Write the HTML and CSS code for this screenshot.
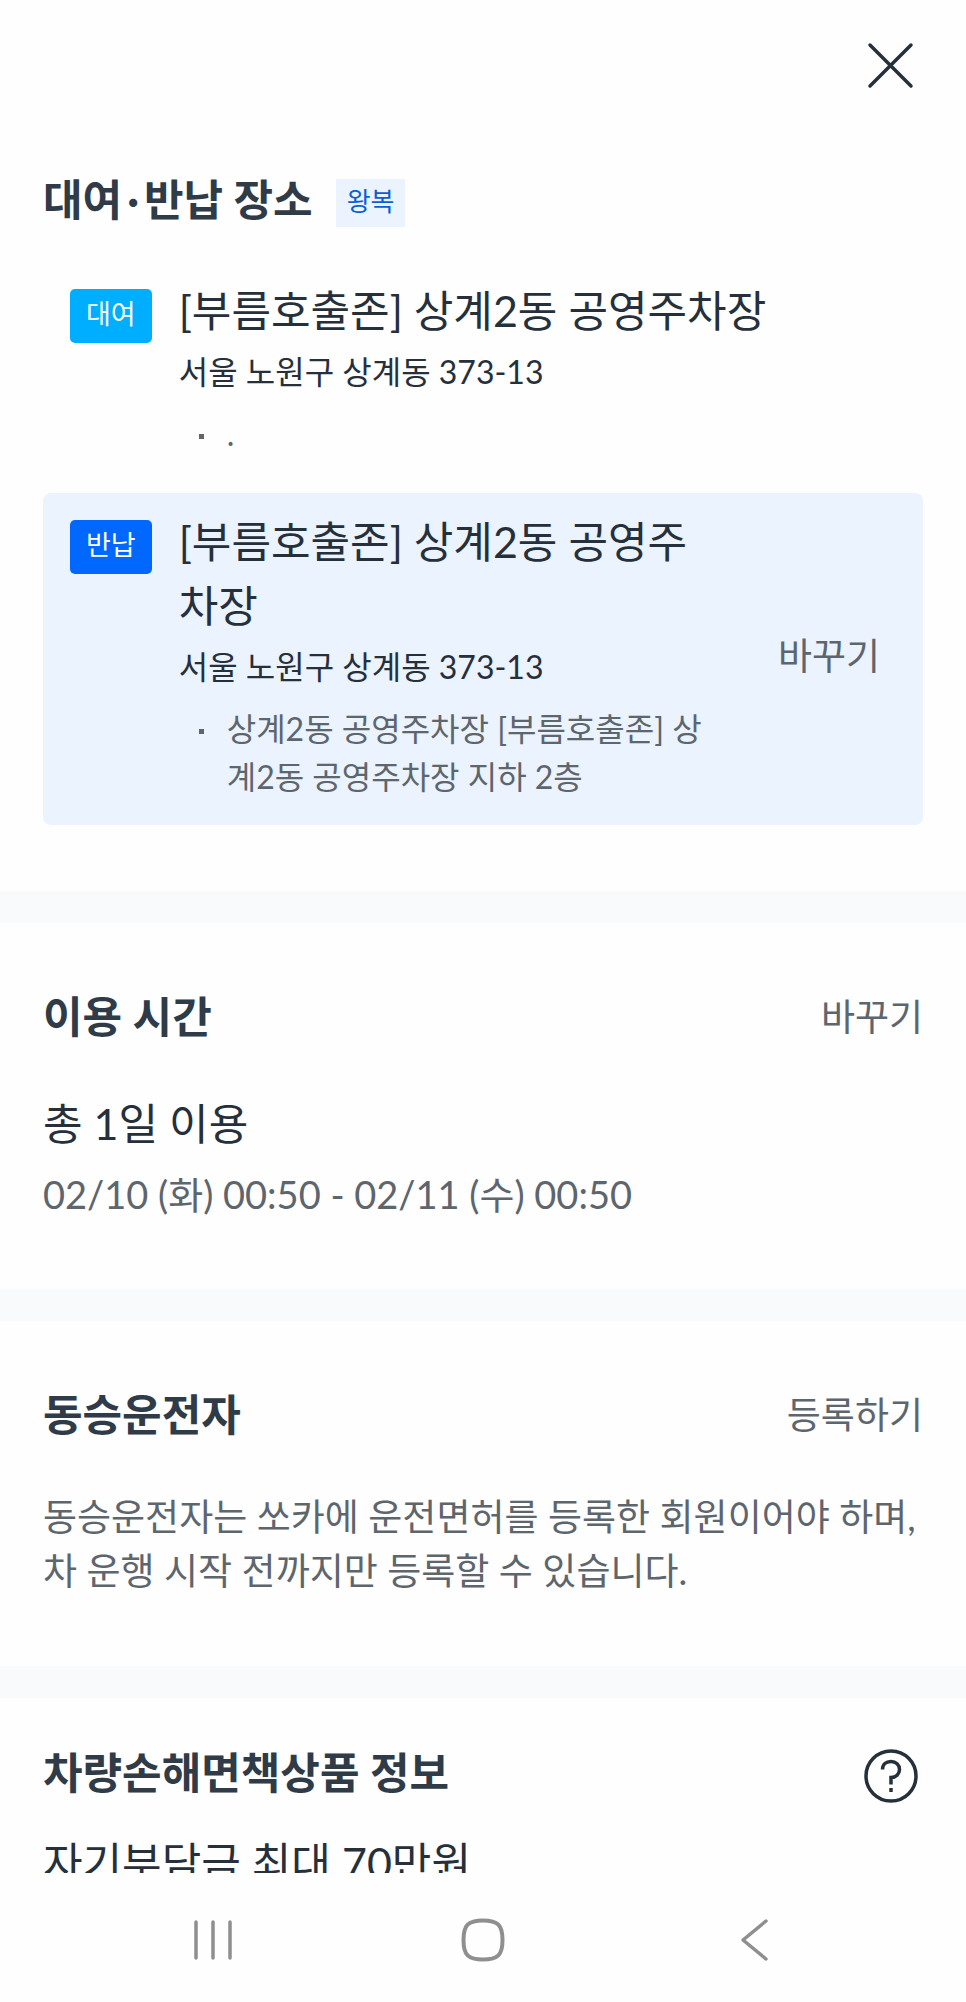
FILE: index.html
```html
<!DOCTYPE html>
<html lang="ko">
<head>
    <meta charset="UTF-8">
    <meta name="viewport" content="width=device-width, initial-scale=1">
    <title>예약 정보</title>
    <link rel="stylesheet" href="styles.css">
</head>

<body>
    <main class="content">
        <header class="topbar">
            <button class="icon-btn" type="button" aria-label="닫기">
                <svg width="54" height="54" viewBox="0 0 54 54" fill="none" stroke="#26303b" stroke-width="3.500" stroke-linecap="round">
                    <path d="M6 7L47 48M47 7L6 48"/>
                </svg>
            </button>
        </header>

        <section class="section places">
            <div class="section-head">
                <h2>대여<span class="dot">·</span>반납 장소</h2>
                <span class="tag">왕복</span>
            </div>
            <div class="place">
                <span class="badge rent">대여</span>
                <div class="place-info">
                    <p class="name">[부름호출존] 상계2동 공영주차장</p>
                    <p class="address">서울 노원구 상계동 373-13</p>
                    <ul class="notes">
                        <li>.</li>
                    </ul>
                </div>
            </div>
            <div class="place selected">
                <span class="badge return">반납</span>
                <div class="place-info">
                    <p class="name">[부름호출존] 상계2동 공영주차장</p>
                    <p class="address">서울 노원구 상계동 373-13</p>
                    <ul class="notes">
                        <li>상계2동 공영주차장 [부름호출존] 상계2동 공영주차장 지하 2층</li>
                    </ul>
                </div>
                <button class="text-btn" type="button">바꾸기</button>
            </div>
        </section>

        <section class="section time">
            <div class="section-head">
                <h2>이용 시간</h2>
                <button class="text-btn" type="button">바꾸기</button>
            </div>
            <p class="name">총 1일 이용</p>
            <p class="period">02/10 (화) 00:50 - 02/11 (수) 00:50</p>
        </section>

        <section class="section driver">
            <div class="section-head">
                <h2>동승운전자</h2>
                <button class="text-btn" type="button">등록하기</button>
            </div>
            <p class="guide">동승운전자는 쏘카에 운전면허를 등록한 회원이어야 하며, 차 운행 시작 전까지만 등록할 수 있습니다.</p>
        </section>

        <section class="section insurance">
            <div class="section-head">
                <h2>차량손해면책상품 정보</h2>
                <button class="icon-btn" type="button" aria-label="도움말">
                    <svg width="54" height="54" viewBox="0 0 54 54" fill="none" stroke="#26303b" stroke-width="3.500">
                        <circle cx="27" cy="27" r="25"/>
                        <path d="M18.500 20.500C18.500 15.500 22 12.500 27 12.500S35.500 16 35.500 20.500S32 28.500 27 28.500V35.500"/>
                        <path d="M27 39V43"/>
                    </svg>
                </button>
            </div>
            <p class="name">자기부담금 최대 70만원</p>
        </section>
    </main>

    <nav class="navbar">
        <button type="button" aria-label="최근 앱">
            <svg width="44" height="44" viewBox="0 0 44 44" fill="none" stroke="#8f8f8f" stroke-width="3.500" stroke-linecap="round">
                <path d="M5 4V40M22 4V40M39 4V40"/>
            </svg>
        </button>
        <button type="button" aria-label="홈">
            <svg width="44" height="44" viewBox="0 0 44 44" fill="none" stroke="#8f8f8f" stroke-width="4">
                <path d="M22 2.500C37 2.500 41.500 7 41.500 22S37 41.500 22 41.500S2.500 37 2.500 22S7 2.500 22 2.500Z"/>
            </svg>
        </button>
        <button type="button" aria-label="뒤로">
            <svg width="44" height="44" viewBox="0 0 44 44" fill="none" stroke="#8f8f8f" stroke-width="3.500" stroke-linecap="round" stroke-linejoin="round">
                <path d="M35 3L12 22L35 41"/>
            </svg>
        </button>
    </nav>
</body>
</html>
```
FILE: styles.css
```css
* {
    box-sizing: border-box;
}

body {
    display: flex;
    flex-direction: column;
    height: 100vh;
    margin: 0;
    background: #fefefe;
    color: #26303b;
    font-family: Lato, "Noto Sans CJK KR", sans-serif;
}

h2, p, ul {
    margin: 0;
    padding: 0;
}

h2 {
    font-size: 43px;
    line-height: 64px;
    font-weight: 700;
    color: #2f3b47;
}

button {
    padding: 0;
    border: 0;
    background: none;
    font-family: inherit;
    cursor: pointer;
}

svg {
    display: block;
}

.content {
    flex: 1;
    min-height: 0;
    overflow: hidden;
}

.topbar {
    display: flex;
    justify-content: flex-end;
    padding: 38px 48px;
}

.section {
    padding: 62px 43px 68px;
    border-bottom: 32px solid #f8fafb;
}

.section-head {
    display: flex;
    align-items: center;
    justify-content: space-between;
}

.text-btn {
    flex: none;
    font-size: 37px;
    line-height: 54px;
    color: #5d656d;
}

.icon-btn {
    flex: none;
}

/* 대여, 반납 장소 */
.places {
    padding-top: 38px;
    padding-bottom: 66px;
}

.places .section-head {
    justify-content: flex-start;
    gap: 23px;
}

.dot {
    margin: 0 5px;
}

.tag {
    margin-top: 5px;
    padding: 4px 11px 8px;
    background: #ebf3fe;
    color: #0a5fd6;
    font-size: 26px;
    line-height: 36px;
}

.place {
    display: flex;
    align-items: flex-start;
    padding: 17px 43px 24px 27px;
    border-radius: 8px;
}

.places .section-head + .place {
    margin-top: 30px;
}

.selected {
    margin-top: 11px;
    background: #ebf3fe;
}

.selected .text-btn {
    align-self: center;
}

.badge {
    flex: none;
    margin: 10px 27px 0 0;
    padding: 7px 16px 11px;
    border-radius: 5px;
    color: #fff;
    font-size: 27px;
    line-height: 36px;
}

.rent {
    background: #00aeff;
}

.return {
    background: #0068ff;
}

.place-info {
    flex: 1;
    min-width: 0;
}

.selected .place-info {
    margin-right: 70px;
}

.name {
    font-size: 43px;
    line-height: 64px;
}

.address {
    margin-top: 2px;
    font-size: 32px;
    line-height: 54px;
}

.notes {
    padding: 11px 0 0 48px;
    list-style: none;
    font-size: 32px;
    line-height: 48px;
    color: #5d656d;
}

.notes li {
    position: relative;
}

.notes li::before {
    content: "";
    position: absolute;
    left: -28px;
    top: 24px;
    width: 5px;
    height: 5px;
    background: #5d656d;
}

/* 이용 시간 */
.time .name {
    margin-top: 43px;
}

.period {
    margin-top: 11px;
    font-size: 38px;
    line-height: 54px;
    color: #5d656d;
}

/* 동승운전자 */
.guide {
    margin-top: 43px;
    font-size: 37px;
    line-height: 54px;
    color: #5d656d;
}

/* 차량손해면책상품 */
.insurance {
    padding-top: 43px;
}

.insurance .icon-btn {
    margin: 5px 5px 0 0;
}

.insurance .name {
    margin-top: 26px;
}

/* 하단 내비게이션 */
.navbar {
    display: grid;
    grid-template-columns: repeat(3, 1fr);
    flex: none;
    height: 129px;
    padding: 4px 8% 0;
    background: #fefefe;
}

.navbar button {
    display: flex;
    align-items: center;
    justify-content: center;
}
```
